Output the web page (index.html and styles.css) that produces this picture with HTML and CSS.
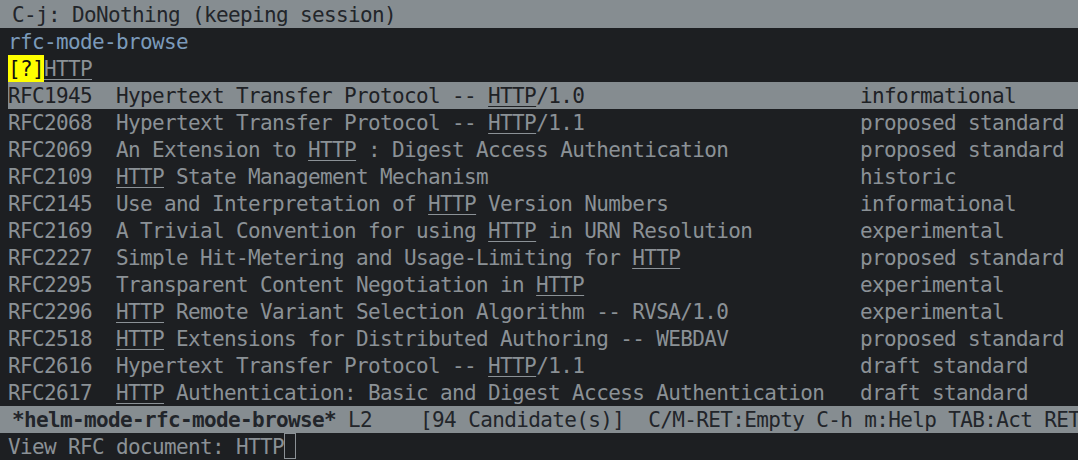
FILE: index.html
```html
<!DOCTYPE html>
<html>
<head>
<meta charset="utf-8">
<link rel="stylesheet" href="styles.css">
</head>
<body>
<div class="frame">
  <div class="echo"><span>C-j: DoNothing (keeping session)</span></div>
  <div class="buffer">
    <div class="line source">rfc-mode-browse</div>
    <div class="line prompt"><span class="mark">[?]</span><span class="u">HTTP</span></div>
    <div class="row sel"><span class="id">RFC1945</span><span class="title">Hypertext Transfer Protocol -- <span class="u">HTTP</span>/1.0</span><span class="status">informational</span></div>
    <div class="row"><span class="id">RFC2068</span><span class="title">Hypertext Transfer Protocol -- <span class="u">HTTP</span>/1.1</span><span class="status">proposed standard</span></div>
    <div class="row"><span class="id">RFC2069</span><span class="title">An Extension to <span class="u">HTTP</span> : Digest Access Authentication</span><span class="status">proposed standard</span></div>
    <div class="row"><span class="id">RFC2109</span><span class="title"><span class="u">HTTP</span> State Management Mechanism</span><span class="status">historic</span></div>
    <div class="row"><span class="id">RFC2145</span><span class="title">Use and Interpretation of <span class="u">HTTP</span> Version Numbers</span><span class="status">informational</span></div>
    <div class="row"><span class="id">RFC2169</span><span class="title">A Trivial Convention for using <span class="u">HTTP</span> in URN Resolution</span><span class="status">experimental</span></div>
    <div class="row"><span class="id">RFC2227</span><span class="title">Simple Hit-Metering and Usage-Limiting for <span class="u">HTTP</span></span><span class="status">proposed standard</span></div>
    <div class="row"><span class="id">RFC2295</span><span class="title">Transparent Content Negotiation in <span class="u">HTTP</span></span><span class="status">experimental</span></div>
    <div class="row"><span class="id">RFC2296</span><span class="title"><span class="u">HTTP</span> Remote Variant Selection Algorithm -- RVSA/1.0</span><span class="status">experimental</span></div>
    <div class="row"><span class="id">RFC2518</span><span class="title"><span class="u">HTTP</span> Extensions for Distributed Authoring -- WEBDAV</span><span class="status">proposed standard</span></div>
    <div class="row"><span class="id">RFC2616</span><span class="title">Hypertext Transfer Protocol -- <span class="u">HTTP</span>/1.1</span><span class="status">draft standard</span></div>
    <div class="row"><span class="id">RFC2617</span><span class="title"><span class="u">HTTP</span> Authentication: Basic and Digest Access Authentication</span><span class="status">draft standard</span></div>
  </div>
  <div class="modeline"><span class="bufname">*helm-mode-rfc-mode-browse*</span> L2    [94 Candidate(s)]  C/M-RET:Empty C-h m:Help TAB:Act RET</div>
  <div class="minibuf">View RFC document: HTTP<span class="cursor"></span></div>
</div>
</body>
</html>
```
FILE: styles.css
```css
html, body {
  margin: 0;
  padding: 0;
  background: #1d1f22;
  overflow: hidden;
}
.frame {
  width: 1078px;
  height: 460px;
  display: flex;
  flex-direction: column;
  font-family: "DejaVu Sans Mono", "Liberation Mono", monospace;
  font-size: 21px;
  letter-spacing: -0.64px;
  color: #8b9196;
  white-space: pre;
  overflow: hidden;
}
.echo {
  height: 28px;
  box-sizing: border-box;
  padding: 3px 0 0 12px;
  line-height: 24px;
  background: #868d91;
  color: #22252a;
}
.buffer {
  display: flex;
  flex-direction: column;
}
.line, .row {
  height: 27px;
  box-sizing: border-box;
  padding-top: 2px;
  line-height: 25px;
  margin-left: 8px;
}
.source {
  color: #7b9aba;
}
.mark {
  display: inline-block;
  height: 27px;
  margin-top: -2px;
  padding-top: 2px;
  box-sizing: border-box;
  vertical-align: top;
  background: #ffff00;
  color: #111;
}
.u {
  text-decoration: underline;
  text-decoration-thickness: 1px;
  text-underline-offset: 3px;
}
.row {
  display: grid;
  grid-template-columns: 108px 744px 1fr;
}
.row.sel {
  background: #858c90;
  color: #1e2125;
}
.modeline {
  height: 27px;
  box-sizing: border-box;
  padding: 2px 0 0 12px;
  line-height: 25px;
  background: #868d91;
  color: #22252a;
  margin-top: 0;
}
.bufname {
  font-weight: bold;
}
.minibuf {
  height: 27px;
  box-sizing: border-box;
  padding: 2px 0 0 8px;
  line-height: 25px;
  display: flex;
  align-items: flex-start;
}
.cursor {
  display: inline-block;
  width: 12px;
  height: 26px;
  margin-top: -2px;
  box-sizing: border-box;
  border: 1px solid #8b9196;
}
```
